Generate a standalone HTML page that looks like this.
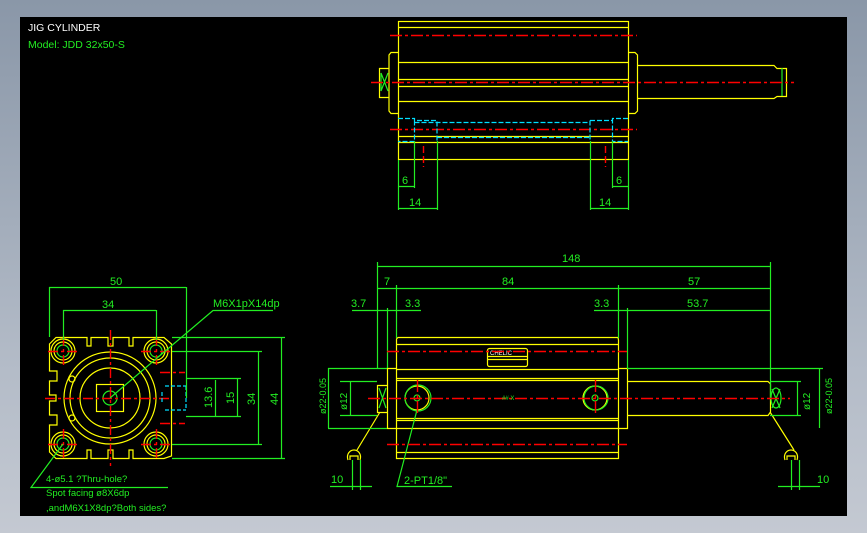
<!DOCTYPE html>
<html><head><meta charset="utf-8"><style>
html,body{margin:0;padding:0;width:867px;height:533px;overflow:hidden;background:linear-gradient(180deg,#8a97a8 0%,#b4bcc8 70%,#c4c9d2 100%);}
svg{position:absolute;left:0;top:0}
text{font-family:"Liberation Sans",sans-serif;}
</style></head><body>
<svg width="867" height="533" viewBox="0 0 867 533" xmlns="http://www.w3.org/2000/svg">
<rect x="20" y="17" width="827" height="499" fill="#000"/>
<text x="28" y="31" fill="#fff" font-size="10.5">JIG  CYLINDER</text>
<text x="28" y="48" fill="#22ee22" font-size="10.5">Model:  JDD  32x50-S</text>

<g fill="none" stroke-width="1.2">
<!-- TOP VIEW -->
<g stroke="#ffff00">
<rect x="398.5" y="21.5" width="230" height="138"/>
<path d="M398 27.5H628M398 62.5H628M398 79.5H628M398 86.5H628M398 101.5H628M398 136.5H628M398 142.5H628"/>
<path d="M398 52.5H391L389 55V111L391 113.5H398"/>
<path d="M389 68.5H379.5V97.5H389"/>
<path d="M628 52.5H635L637.5 55V111L635 113.5H628"/>
<path d="M637.5 65.5H774L777 68.5H786.5V96.5H777L774 98.5H637.5"/>
</g>
<path d="M381 73L388 91M388 73L381 91M381 73V91" stroke="#22ee22"/>
<path d="M782 68V96" stroke="#22ee22"/>
<g stroke="#ff0000" stroke-width="1.4">
<path d="M390 35.5H637M371 82.5H794M390 129.5H637" stroke-dasharray="12,3,3,3"/>
<path d="M423.5 146V167M605.5 146V167" stroke-dasharray="7,3"/>
</g>
<path d="M398 118.5H414.5V120.5H437V141M414.5 120.5V141.5H398M414.5 122.5H590M590 120.5H612.5V118.5H628M590 120.5V141M612.5 118.5V141.5H628M437 137.5H590" stroke="#00e0ff" stroke-dasharray="5,2"/>
<g stroke="#22ee22">
<path d="M398.5 160V210M414.5 141V188M437.5 141V210M590.5 141V210M612.5 141V188M628.5 160V210"/>
<path d="M398 186.5H414M398 208.5H437M612 186.5H628M590 208.5H628"/>
</g>
<g fill="#22ee22" font-size="11" stroke="none">
<text x="402" y="184">6</text><text x="409" y="206">14</text>
<text x="616" y="184">6</text><text x="599" y="206">14</text>
</g>

<!-- FRONT VIEW -->
<g stroke="#ffff00">
<path d="M56 337.5H87V346H91V337.5H108V346H113V337.5H129V346H133V337.5H164L171.5 344V456L164 458.5H133V450H129V458.5H113V450H108V458.5H91V450H87V458.5H56L49.5 452V425H57V415H49.5V401H56V395H49.5V381H57V371H49.5V344Z"/>
<circle cx="63" cy="351" r="12"/><circle cx="156" cy="351" r="12"/>
<circle cx="63" cy="444" r="12"/><circle cx="156" cy="444" r="12"/>
<circle cx="63" cy="351" r="9"/><circle cx="156" cy="351" r="9"/>
<circle cx="63" cy="444" r="9"/><circle cx="156" cy="444" r="9"/>
<circle cx="110" cy="398" r="46"/><circle cx="110" cy="398" r="40"/>
<circle cx="110" cy="398" r="30"/>
<rect x="96.5" y="384.5" width="27" height="27"/>
<circle cx="72" cy="379" r="3"/><circle cx="72" cy="418" r="3"/>
</g>
<g stroke="#22ee22">
<circle cx="63" cy="351" r="6"/><circle cx="156" cy="351" r="6"/>
<circle cx="63" cy="444" r="6"/><circle cx="156" cy="444" r="6"/>
<circle cx="110" cy="398" r="7"/>
</g>
<g stroke="#ff0000" stroke-width="1.4" stroke-dasharray="10,3,3,3">
<path d="M45 398.5H172M110.5 330V466M48 351.5H78M141 351.5H172M48 444.5H78M141 444.5H172M63.5 336V366M156.5 336V366M63.5 429V460M156.5 429V460M160 372.5H185M160 423.5H185"/>
</g>
<path d="M165 386H186M165 410H186M186 386V410M162 392V404" stroke="#00e0ff" stroke-dasharray="4,2"/>
<g stroke="#22ee22">
<path d="M49.5 287V337M186.5 287V398M63.5 310V340M156.5 310V340M49 287.5H186M63 310.5H156"/>
<path d="M110 398L213 310.5H273"/>
<path d="M172 337.5H285M172 351.5H262M186 378.5H241M186 416.5H241M172 444.5H262M172 458.5H285"/>
<path d="M281.5 337V458M258.5 351V444M237.5 378V417M215.5 380V416"/>
<path d="M63 444L31 487.5H168"/>
</g>
<g fill="#22ee22" font-size="11" stroke="none">
<text x="110" y="285">50</text><text x="102" y="308">34</text>
<text x="213" y="307">M6X1pX14dp</text>
<text transform="translate(212,408) rotate(-90)">13.6</text>
<text transform="translate(234,404) rotate(-90)">15</text>
<text transform="translate(255,405) rotate(-90)">34</text>
<text transform="translate(278,405) rotate(-90)">44</text>
<text x="46" y="482" font-size="9.5">4-ø5.1 ?Thru-hole?</text>
<text x="46" y="496" font-size="9.5">Spot facing ø8X6dp</text>
<text x="46" y="511" font-size="9.5">,andM6X1X8dp?Both sides?</text>
</g>

<!-- SIDE VIEW -->
<g stroke="#ffff00">
<path d="M398 337.5H618L618.5 340V458.5H396.5V339Z"/>
<path d="M396 344.5H618M396 369.5H618M396 378.5H618M396 380.5H618M396 418.5H618M396 420.5H618M396 428.5H618M396 452.5H618"/>
<path d="M396 368.5H387.5V428.5H396M618 368.5H627.5V428.5H618"/>
<path d="M387 385.5H377.5V412.5H387"/>
<path d="M627 381.5H768L770.5 384V412L768 415.5H627"/>
<circle cx="417" cy="398" r="12"/><circle cx="595" cy="398" r="12"/>
<rect x="487.5" y="348.5" width="40" height="18" rx="2"/>
<path d="M488 356.5H527M488 359.5H527"/>
<path d="M380 412L357 450M770 412L794 450"/>
<path d="M348 460C346 454 350 450 354 450C358 450 362 454 360 460M350 460V456H358V460"/>
<path d="M785 460C783 454 787 450 791 450C795 450 799 454 797 460M787 460V456H795V460"/>
</g>
<text x="490" y="355" fill="#fff" font-size="6">CHELIC</text>
<g stroke="#22ee22">
<circle cx="418" cy="398" r="13"/><circle cx="596" cy="398" r="12"/>
<circle cx="417" cy="398" r="3"/><circle cx="595" cy="398" r="3"/>
<path d="M379 388L386 408M386 388L379 408"/>
<ellipse cx="776" cy="398" rx="5" ry="10"/>
<path d="M772 389L780 408M780 389L772 408"/>
<path d="M377.5 262V368M770.5 262V398M396.5 285V338M618.5 285V338M387.5 308V368M627.5 308V368"/>
<path d="M377 266.5H770M377 288.5H770M352 310.5H421M594 310.5H770"/>
<path d="M328 368.5H387M328 428.5H387M340 381.5H377M340 415.5H377M328.5 368V428M350.5 381V415"/>
<path d="M627 368.5H823M770 381.5H801M770 415.5H801M819.5 368V428M797.5 381V415"/>
<path d="M417 410L397 486.5H452"/>
<path d="M330 486.5H372M352.5 460V490M360.5 460V490M791.5 460V490M799.5 460V490M778 486.5H820"/>
</g>
<g stroke="#ff0000" stroke-width="1.4" stroke-dasharray="12,3,3,3">
<path d="M387 351.5H627M368 398.5H790M387 444.5H627M417.5 380V416M595.5 380V416"/>
</g>
<g fill="#22ee22" font-size="11" stroke="none">
<text x="562" y="262">148</text>
<text x="384" y="285">7</text><text x="502" y="285">84</text><text x="688" y="285">57</text>
<text x="351" y="307">3.7</text><text x="405" y="307">3.3</text>
<text x="594" y="307">3.3</text><text x="687" y="307">53.7</text>
<text transform="translate(326,414) rotate(-90)" font-size="9">ø22-0.05</text>
<text transform="translate(347,410) rotate(-90)" font-size="10">ø12</text>
<text transform="translate(810,410) rotate(-90)" font-size="10">ø12</text>
<text transform="translate(832,414) rotate(-90)" font-size="9">ø22-0.05</text>
<text x="331" y="483">10</text><text x="817" y="483">10</text>
<text x="404" y="484">2-PT1/8"</text>
<text x="502" y="400" font-size="6">##  X</text>
</g>
</g>
</svg>
</body></html>
